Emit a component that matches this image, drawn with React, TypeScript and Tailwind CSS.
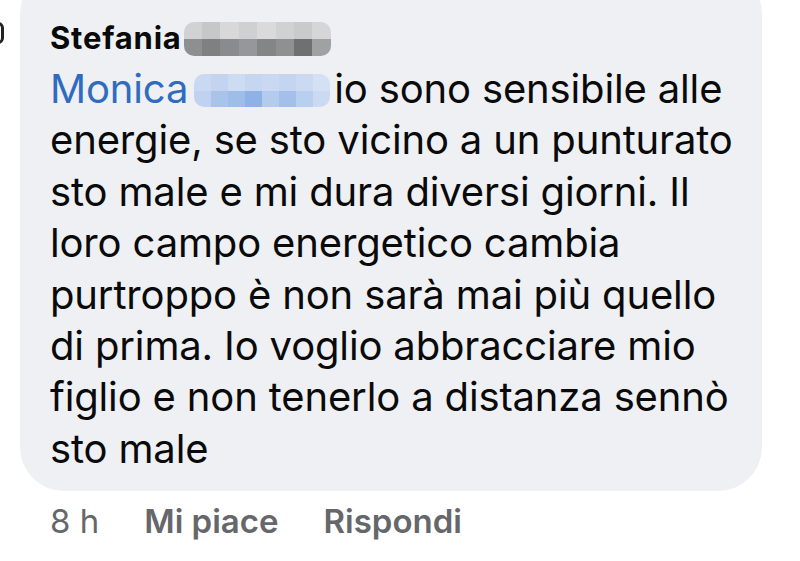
import React from 'react';

const font = { fontFamily: 'Inter, "Liberation Sans", sans-serif' };

const grayCells = [
  ['#d2d2d4', '#c6c7c9', '#d8d8da', '#cfd0d2', '#dadadc', '#d0d1d3', '#c9cacc', '#d6d6d8'],
  ['#8e8f91', '#7f8082', '#8a8b8d', '#96979a', '#848587', '#8f9092', '#6f7072', '#a0a1a3'],
];
const blueCells = [
  ['#c9d9f1', '#c2d4f0', '#cddcf2', '#c6d6f0', '#cad9f1', '#c3d5f1', '#cbdaf2', '#d4e0f3'],
  ['#c0d2ef', '#a9c3eb', '#9fbde9', '#8fb2e6', '#b4cbee', '#a4c0ea', '#b9cff0', '#cbdaf2'],
];

function Blur({ tone }: { tone: 'gray' | 'blue' }) {
  const rows = tone === 'gray' ? grayCells : blueCells;
  return (
    <span className="flex h-full w-full flex-col overflow-hidden rounded-[10px]">
      {rows.map((row, r) => (
        <span key={r} className="flex flex-1">
          {row.map((c, i) => (
            <span key={i} className="h-full flex-1" style={{ background: c }} />
          ))}
        </span>
      ))}
    </span>
  );
}

const lines = [
  'energie, se sto vicino a un punturato',
  'sto male e mi dura diversi giorni. Il',
  'loro campo energetico cambia',
  'purtroppo è non sarà mai più quello',
  'di prima. Io voglio abbracciare mio',
  'figlio e non tenerlo a distanza sennò',
  'sto male',
];

export default function App() {
  return (
    <div className="relative h-[561px] w-[800px] overflow-hidden bg-white" style={font}>
      <div className="absolute left-[-8px] top-[22px] h-[22px] w-[12px] rounded-full border-[3px] border-[#222]" />
      <div className="ml-[20px] mt-[-30px] w-[742px] rounded-[44px] bg-[#eef0f3] pb-[17px] pl-[30px] pr-[20px] pt-[52px]">
        <div className="flex h-[34px] items-end text-[31px] font-bold leading-none tracking-[0.8px] text-[#0a0a0a]">
          <span className="pb-[3px]">Stefania</span>
          <span className="ml-[2px] h-[34px] w-[147px] self-start">
            <Blur tone="gray" />
          </span>
        </div>
        <div className="mt-[7px] text-[40px] leading-[51.4px] tracking-[-0.15px] text-[#0a0a0a]">
          <div className="flex items-center">
            <span className="text-[#2f6cc0]">Monica</span>
            <span className="ml-[6px] mr-[4px] h-[33px] w-[136px] translate-y-[2px]">
              <Blur tone="blue" />
            </span>
            <span>io sono sensibile alle</span>
          </div>
          {lines.map((l) => (
            <div key={l}>{l}</div>
          ))}
        </div>
      </div>
      <div className="ml-[50px] mt-[6px] flex items-baseline gap-[45px] text-[33px] text-[#65676b]">
        <span>8 h</span>
        <span className="font-semibold">Mi piace</span>
        <span className="font-semibold">Rispondi</span>
      </div>
    </div>
  );
}
